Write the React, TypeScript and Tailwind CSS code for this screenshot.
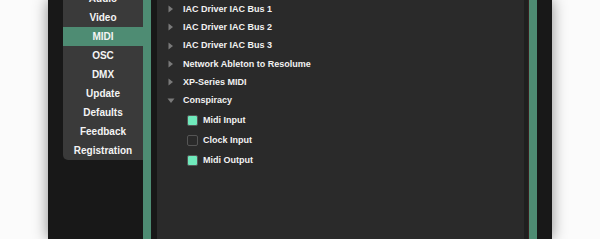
import React from "react";

const font = { fontFamily: '"Liberation Sans", Arial, sans-serif' };

function TriRight() {
  return (
    <svg width="6" height="8" viewBox="0 0 6 8" className="shrink-0">
      <path d="M0.5 0.5 L5 4 L0.5 7.5 Z" fill="#7a7a7a" />
    </svg>
  );
}
function TriDown() {
  return (
    <svg width="8" height="6" viewBox="0 0 8 6" className="shrink-0">
      <path d="M0.5 0.5 L7.5 0.5 L4 5 Z" fill="#7a7a7a" />
    </svg>
  );
}

function Check({ on, label }: { on: boolean; label: string }) {
  return (
    <div className="h-[19.7px] flex items-center pl-[30px] gap-[5px]">
      <div
        className={
          "w-[11px] h-[11px] rounded-[2px] border border-[#555] " +
          (on ? "bg-[#6fe9bb]" : "bg-[#2a2a2a]")
        }
      />
      <span className="text-[9px] font-bold text-[#f2f2f2] leading-none">{label}</span>
    </div>
  );
}

export default function App() {
  const nav = ["Audio", "Video", "MIDI", "OSC", "DMX", "Update", "Defaults", "Feedback", "Registration"];
  const tree = [
    "IAC Driver IAC Bus 1",
    "IAC Driver IAC Bus 2",
    "IAC Driver IAC Bus 3",
    "Network Ableton to Resolume",
    "XP-Series MIDI",
  ];
  return (
    <div className="w-[600px] h-[239px] bg-[#fbfbfb] overflow-hidden" style={font}>
      <div className="ml-[48px] w-[504px] h-[239px] bg-[#181818] flex shadow-[0_0_14px_rgba(0,0,0,0.45)]">
        <div className="w-[15px] shrink-0" />
        <div className="w-[80px] shrink-0 h-[160px] bg-[#3a3a3a] rounded-bl-[5px] flex flex-col justify-end">
          {nav.map((n) => (
            <div
              key={n}
              className={
                "h-[19px] shrink-0 flex items-center justify-center text-[10px] font-bold text-[#f4f4f4] leading-none " +
                (n === "MIDI" ? "bg-[#4e8c73]" : "")
              }
            >
              {n}
            </div>
          ))}
        </div>
        <div className="w-[8px] shrink-0 bg-[#4e8c73]" />
        <div className="w-[6px] shrink-0" />
        <div className="w-[367px] shrink-0 bg-[#2a2a2a] flex flex-col">
          {tree.map((t) => (
            <div key={t} className="h-[18.3px] flex items-center pl-[11px] gap-[9px]">
              <TriRight />
              <span className="text-[9px] font-bold text-[#f2f2f2] leading-none">{t}</span>
            </div>
          ))}
          <div className="h-[18.3px] flex items-center pl-[10px] gap-[8px]">
            <TriDown />
            <span className="text-[9px] font-bold text-[#f2f2f2] leading-none">Conspiracy</span>
          </div>
          <div className="h-[1px]" />
          <Check on={true} label="Midi Input" />
          <Check on={false} label="Clock Input" />
          <Check on={true} label="Midi Output" />
        </div>
        <div className="w-[5px] shrink-0 bg-[#1f1f1f] border-r border-[#3a2020]" />
        <div className="w-[8px] shrink-0 bg-[#4e8c73]" />
        <div className="flex-1" />
      </div>
    </div>
  );
}
